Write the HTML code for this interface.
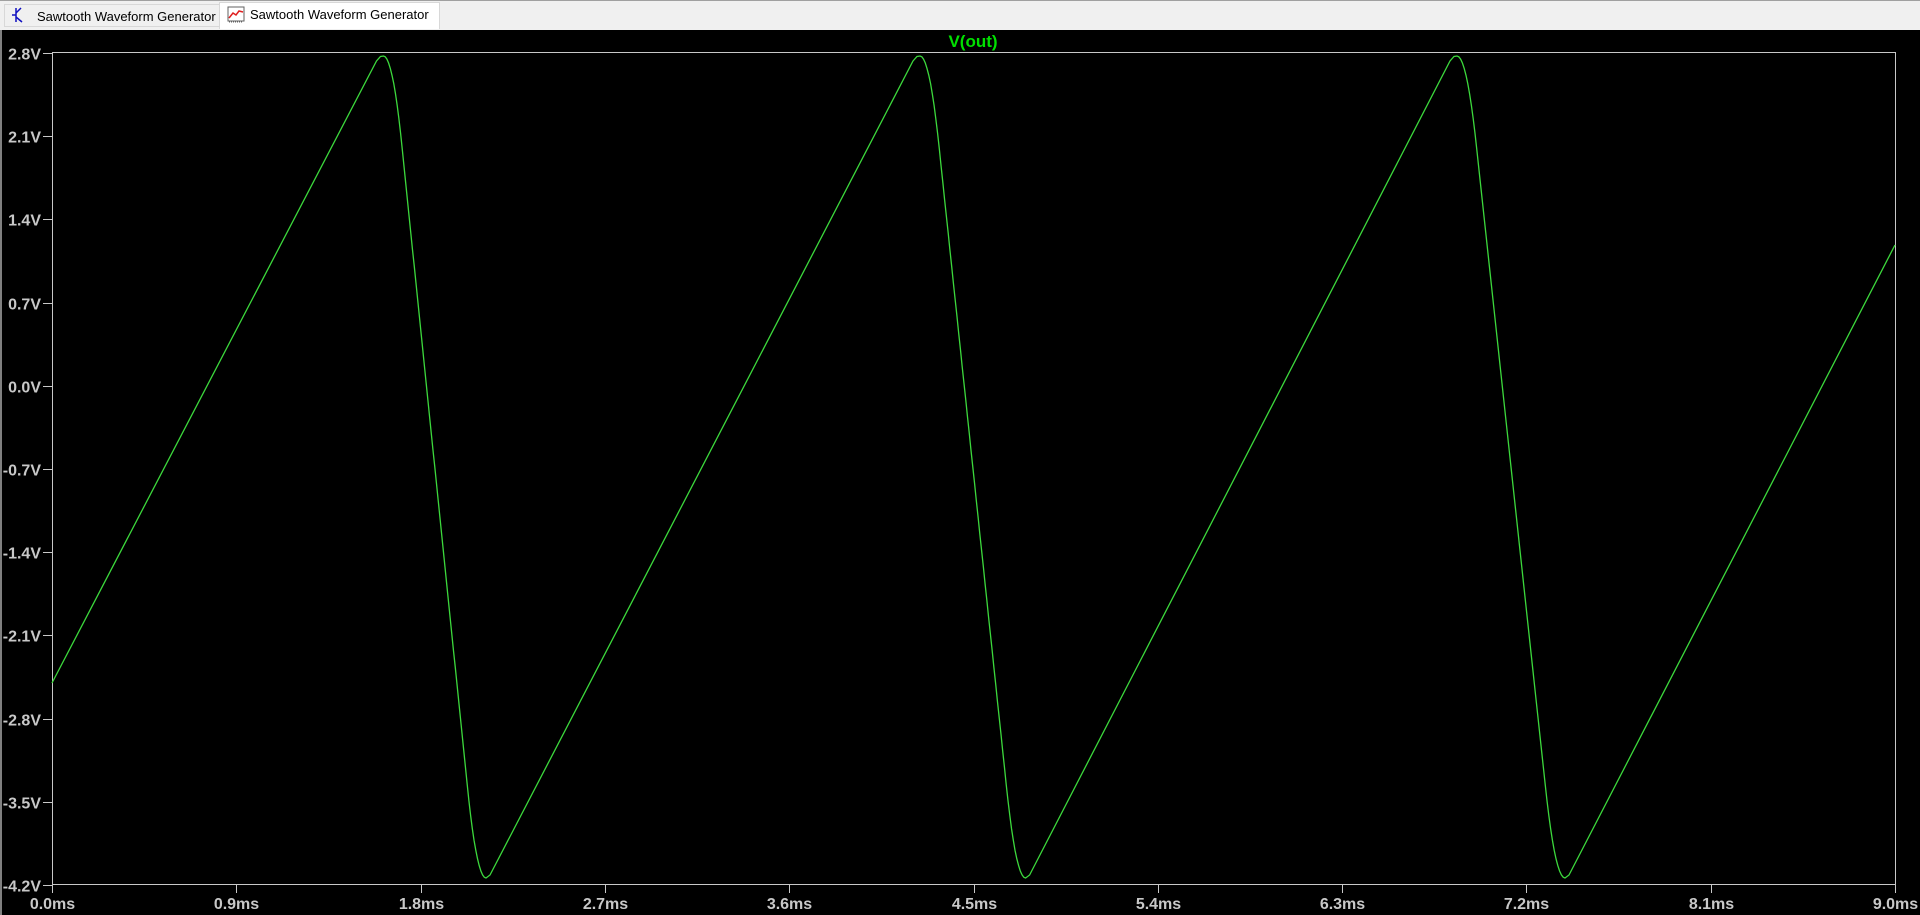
<!DOCTYPE html>
<html><head><meta charset="utf-8"><style>
html,body{margin:0;padding:0;width:1920px;height:915px;overflow:hidden;background:#000;font-family:"Liberation Sans",Arial,sans-serif;}
#bar{position:absolute;left:0;top:0;width:1920px;height:30px;background:#f0f0f0;border-top:1px solid #a0a0a0;box-sizing:border-box;}
.tab{position:absolute;font-size:13px;color:#000;white-space:nowrap;box-sizing:border-box;}
#t1{left:4px;top:3px;width:216px;height:23px;background:#f0f0f0;border:1px solid #d8d8d8;padding:4px 0 0 32px;}
#t2{left:219px;top:1px;width:221px;height:27px;background:#fff;border:1px solid #d8d8d8;border-bottom:none;padding:4px 0 0 30px;}
svg{position:absolute;left:0;top:0;}
text{font-family:"Liberation Sans",Arial,sans-serif;font-weight:bold;}
</style></head><body>
<div id="bar">
<div class="tab" id="t1">Sawtooth Waveform Generator</div>
<div class="tab" id="t2">Sawtooth Waveform Generator</div>
</div>
<svg width="1920" height="915" viewBox="0 0 1920 915">
<rect x="0" y="30" width="2" height="885" fill="#808080"/>
<g transform="translate(12,7)" stroke="#1010c0" stroke-width="1.5" fill="none">
<line x1="4" y1="1" x2="4" y2="15"/><line x1="4" y1="8" x2="0" y2="8"/><line x1="4" y1="6" x2="9" y2="1"/><line x1="4" y1="10" x2="10" y2="15"/>
</g>
<g transform="translate(228,7)">
<rect x="0" y="0" width="16" height="14" fill="#fff" stroke="#606060"/>
<polyline points="1,11 5,6 8,8 11,4 15,5" fill="none" stroke="#e02020" stroke-width="1.5"/>
<line x1="1" y1="15" x2="15" y2="15" stroke="#606060" stroke-dasharray="1,1"/>
</g>
<text x="973" y="47" fill="#00e000" font-size="17" text-anchor="middle">V(out)</text>
<rect x="52.5" y="52.5" width="1843" height="832" fill="none" stroke="#c8c8c8" stroke-width="1"/>
<g id="ax" stroke="#c8c8c8" stroke-width="1"></g>
<g id="lb" fill="#c8c8c8" font-size="16"></g>
<path id="w" fill="none" stroke="#3cd83c" stroke-width="1.3"/>
</svg>
<script>
(function(){
var ax=document.getElementById('ax'),lb=document.getElementById('lb'),ns='http://www.w3.org/2000/svg';
function el(p,t,a,tx){var e=document.createElementNS(ns,t);for(var k in a)e.setAttribute(k,a[k]);if(tx)e.textContent=tx;p.appendChild(e);}
var yl=['2.8V','2.1V','1.4V','0.7V','0.0V','-0.7V','-1.4V','-2.1V','-2.8V','-3.5V','-4.2V'];
var xl=['0.0ms','0.9ms','1.8ms','2.7ms','3.6ms','4.5ms','5.4ms','6.3ms','7.2ms','8.1ms','9.0ms'];
for(var i=0;i<=10;i++){
 var y=Math.round(53+i*83.2)+0.5;
 el(ax,'line',{x1:43,y1:y,x2:52,y2:y});
 el(lb,'text',{x:41,y:y+6,'text-anchor':'end'},yl[i]);
 var x=Math.round(52+i*184.3)+0.5;
 el(ax,'line',{x1:x,y1:885,x2:x,y2:893});
 el(lb,'text',{x:x,y:909,'text-anchor':'middle'},xl[i]);
}
var yTop=56,yBot=878;
var peaks=[383.5,920,1457],mins=[486,1025.6,1565];
var pts=[];
var a=0.18;
function sf(u){if(u<a)return u*u/(2*a*(1-a));if(u>1-a)return 1-(1-u)*(1-u)/(2*a*(1-a));return (u-a/2)/(1-a);}
function fall(xp,xm){var n=60;for(var k=1;k<=n;k++){var u=k/n;pts.push([xp+(xm-xp)*u,yTop+(yBot-yTop)*sf(u)]);}}
for(var c=0;c<3;c++){pts.push([peaks[c]-7,yTop+5]);pts.push([peaks[c]-3,yTop+0.5]);pts.push([peaks[c],yTop]);fall(peaks[c],mins[c]);pts.push([mins[c]+4,yBot-3]);}
pts.push([1895,245]);
var d='M52,683';
pts.forEach(function(p){d+=' L'+p[0].toFixed(1)+','+p[1].toFixed(1);});
document.getElementById('w').setAttribute('d',d);
})();
</script>
</body></html>
